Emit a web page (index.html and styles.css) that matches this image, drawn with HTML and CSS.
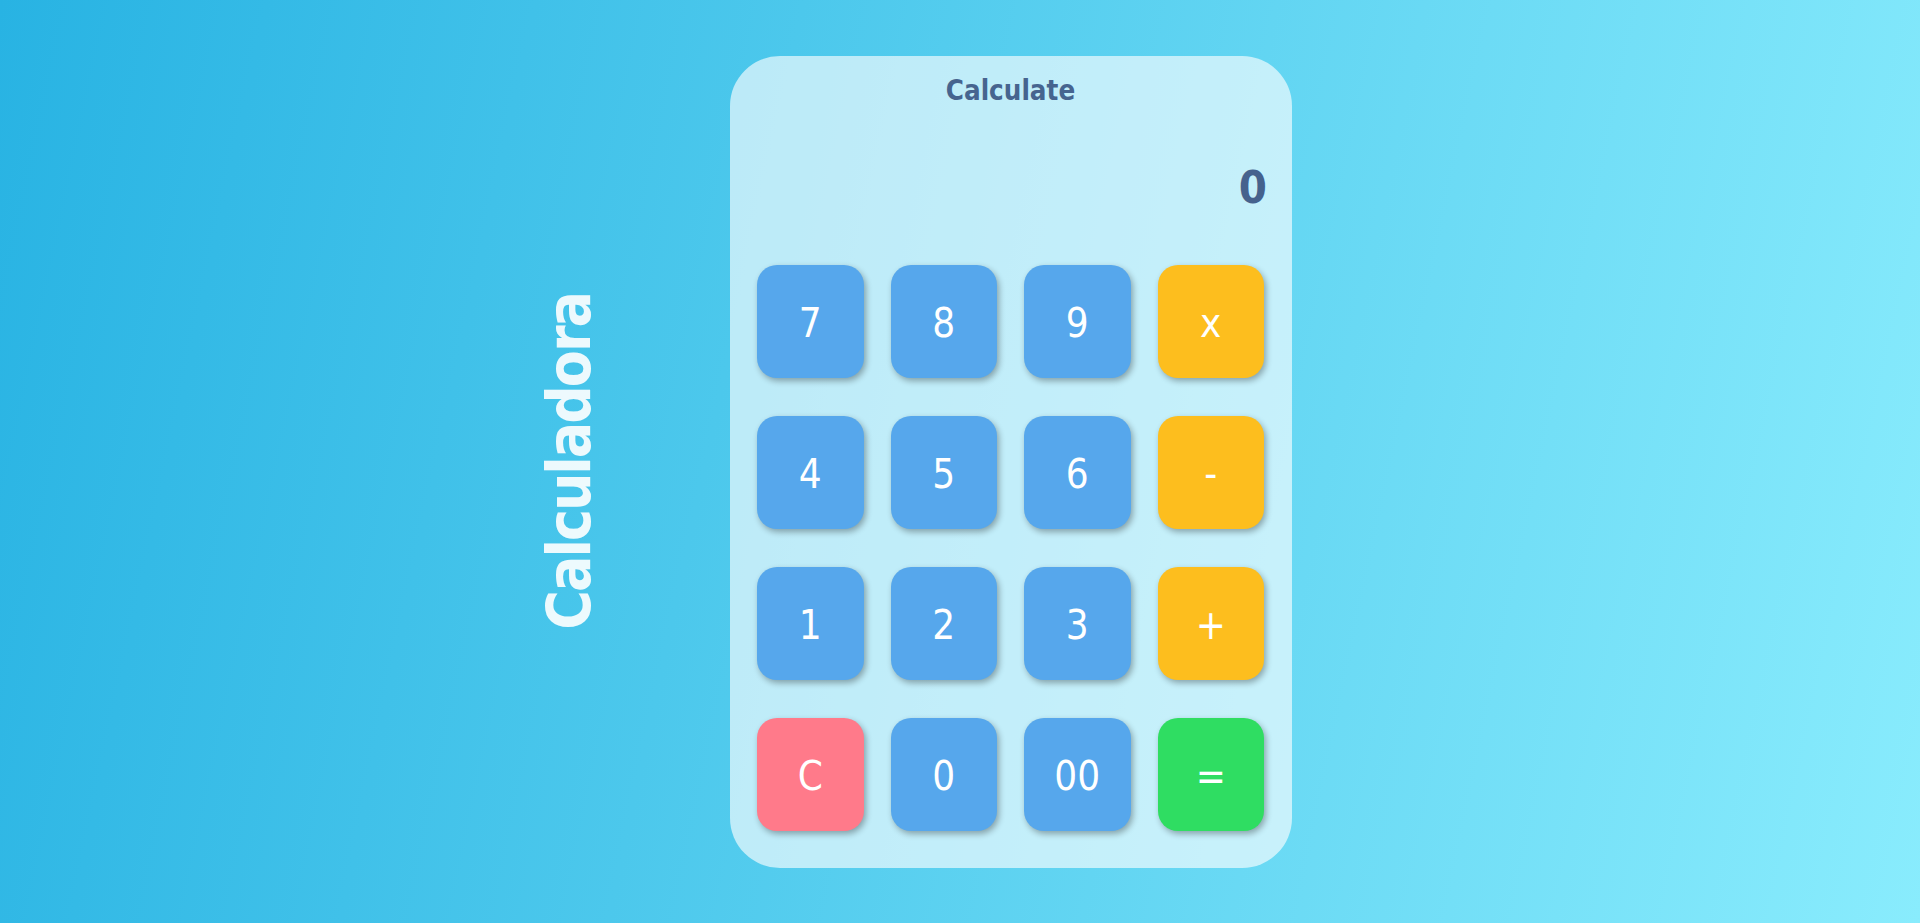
FILE: index.html
```html
<!DOCTYPE html>
<html lang="pt">
<head>
<meta charset="utf-8">
<title>Calculadora</title>
<link rel="stylesheet" href="styles.css">
</head>
<body>
<main class="page">
  <h1 class="side-title">Calculadora</h1>
  <section class="calc">
    <h2 class="calc-title">Calculate</h2>
    <div class="display">0</div>
    <div class="keys">
      <button class="key num">7</button>
      <button class="key num">8</button>
      <button class="key num">9</button>
      <button class="key op">x</button>
      <button class="key num">4</button>
      <button class="key num">5</button>
      <button class="key num">6</button>
      <button class="key op">-</button>
      <button class="key num">1</button>
      <button class="key num">2</button>
      <button class="key num">3</button>
      <button class="key op">+</button>
      <button class="key clear">C</button>
      <button class="key num">0</button>
      <button class="key num">00</button>
      <button class="key eq">=</button>
    </div>
  </section>
</main>
</body>
</html>
```
FILE: styles.css
```css
* { box-sizing: border-box; }
html, body { margin: 0; padding: 0; }
body {
  height: 923px;
  overflow: hidden;
  font-family: "DejaVu Sans Condensed", "DejaVu Sans", sans-serif;
  background: linear-gradient(102deg, #28b3e3 0%, #4cc8ec 38%, #89ecfd 100%);
}
.page {
  height: 923px;
  display: flex;
  align-items: center;
  justify-content: center;
  padding-right: 89px;
}
.side-title {
  margin: 0 131px 0 0;
  writing-mode: vertical-rl;
  transform: rotate(180deg);
  font-size: 60px;
  line-height: 60px;
  font-weight: bold;
  letter-spacing: -2px;
  color: rgba(255, 255, 255, 0.9);
  white-space: nowrap;
}
.calc {
  width: 562px;
  height: 812px;
  border-radius: 50px;
  background: rgba(255, 255, 255, 0.63);
  padding: 19px 28px 37px 27px;
  display: flex;
  flex-direction: column;
}
.calc-title {
  margin: 0;
  text-align: center;
  font-size: 27.5px;
  line-height: 30px;
  font-weight: bold;
  color: #46648f;
}
.display {
  padding: 61px 0 55px;
  margin-right: -3px;
  text-align: right;
  font-size: 45px;
  line-height: 44px;
  font-weight: bold;
  color: #45628d;
}
.keys {
  display: grid;
  grid-template-columns: repeat(4, 1fr);
  grid-auto-rows: 113px;
  gap: 38px 27px;
}
.key {
  border: none;
  border-radius: 20px;
  font-family: inherit;
  font-size: 40px;
  color: #fff;
  display: flex;
  align-items: center;
  justify-content: center;
  padding: 4px 0 0;
  box-shadow: 2px 3px 6px rgba(0, 0, 0, 0.32);
}
.num { background: #56a7ec; }
.op { background: #fdbe1e; }
.clear { background: #ff7a8a; }
.eq { background: #2fdd62; }
```
